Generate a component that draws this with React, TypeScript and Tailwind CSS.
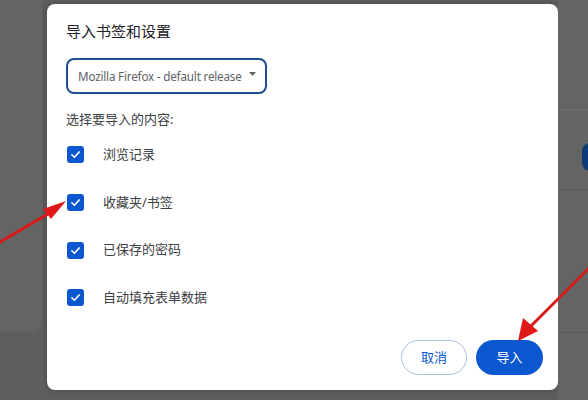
import React from "react";

const Check = () => (
  <div className="w-[17px] h-[17px] rounded-[3px] bg-[#0b57d0] flex items-center justify-center">
    <svg width="11" height="11" viewBox="0 0 12 12">
      <path d="M2 6.3 L4.8 9 L10 3.2" fill="none" stroke="white" strokeWidth="1.7" strokeLinecap="round" strokeLinejoin="round" />
    </svg>
  </div>
);

const items = ["浏览记录", "收藏夹/书签", "已保存的密码", "自动填充表单数据"];

export default function App() {
  return (
    <div
      className="relative w-[588px] h-[400px] overflow-hidden bg-[#5e5e5e] flex"
      style={{ fontFamily: '"Noto Sans", "Noto Sans CJK SC", sans-serif' }}
    >
      {/* left dimmed background strip */}
      <div className="w-[47px] h-full flex flex-col">
        <div className="h-[332px] mr-[3px] bg-[#646464] rounded-br-[10px] border-r border-[#585858]" />
      </div>

      {/* dialog */}
      <div className="mt-[4px] w-[511px] h-[386px] bg-white rounded-[8px] shadow-[0_0_6px_rgba(0,0,0,0.25)] flex flex-col pl-[19px] pr-[15px]">
        <div className="pt-[16px] text-[15px] leading-[22px] text-[#202124]">导入书签和设置</div>
        <div className="mt-[16px] w-[201px] h-[36px] border-2 border-[#1c4f91] rounded-[8px] flex items-center pl-[10px] pr-[9px] overflow-hidden">
          <span className="pt-[2px] text-[11.7px] text-[#5f6368] whitespace-nowrap tracking-[-0.2px]" style={{ fontFamily: '"Noto Sans", sans-serif' }}>
            Mozilla Firefox - default release
          </span>
          <svg className="ml-auto shrink-0 -mt-[3px]" width="7" height="5" viewBox="0 0 7 5">
            <path d="M0 0 L7 0 L3.5 4 Z" fill="#5f6368" />
          </svg>
        </div>
        <div className="mt-[15px] text-[13px] leading-[20px] text-[#3c4043]">选择要导入的内容:</div>
        <div className="flex flex-col mt-[2px]">
          {items.map((t) => (
            <div key={t} className="h-[47.7px] flex items-center">
              <div className="ml-[1px]"><Check /></div>
              <span className="ml-[19px] text-[13px] text-[#3c4043]">{t}</span>
            </div>
          ))}
        </div>
        <div className="mt-auto mb-[15px] flex justify-end gap-[9px]">
          <div className="w-[66px] h-[35px] rounded-full border border-[#a9bfdc] flex items-center justify-center text-[13px] text-[#0b57d0]">
            取消
          </div>
          <div className="w-[67px] h-[35px] rounded-full bg-[#0b57d0] flex items-center justify-center text-[13px] text-white">
            导入
          </div>
        </div>
      </div>

      {/* right dimmed background strip */}
      <div className="flex-1 h-full bg-[#646464] flex flex-col">
        <div className="h-[110px] border-b border-[#707070]" />
        <div className="h-[80px] border-b border-[#595959] relative">
          <div className="absolute right-[-10px] top-[33px] w-[16px] h-[28px] rounded-full bg-[#0f3a7a]" />
        </div>
        <div className="h-[143px] border-b border-[#595959]" />
      </div>

      {/* annotation arrows */}
      <svg className="absolute inset-0 pointer-events-none" width="588" height="400">
        <line x1="-5" y1="245" x2="58" y2="208" stroke="#d81a1a" strokeWidth="3" />
        <path d="M66 201 L43 209 L51 219 Z" fill="#e01818" />
        <line x1="595" y1="262" x2="527" y2="330" stroke="#d81a1a" strokeWidth="3" />
        <path d="M518 341 L523 318 L538 331 Z" fill="#e01818" />
      </svg>
    </div>
  );
}
